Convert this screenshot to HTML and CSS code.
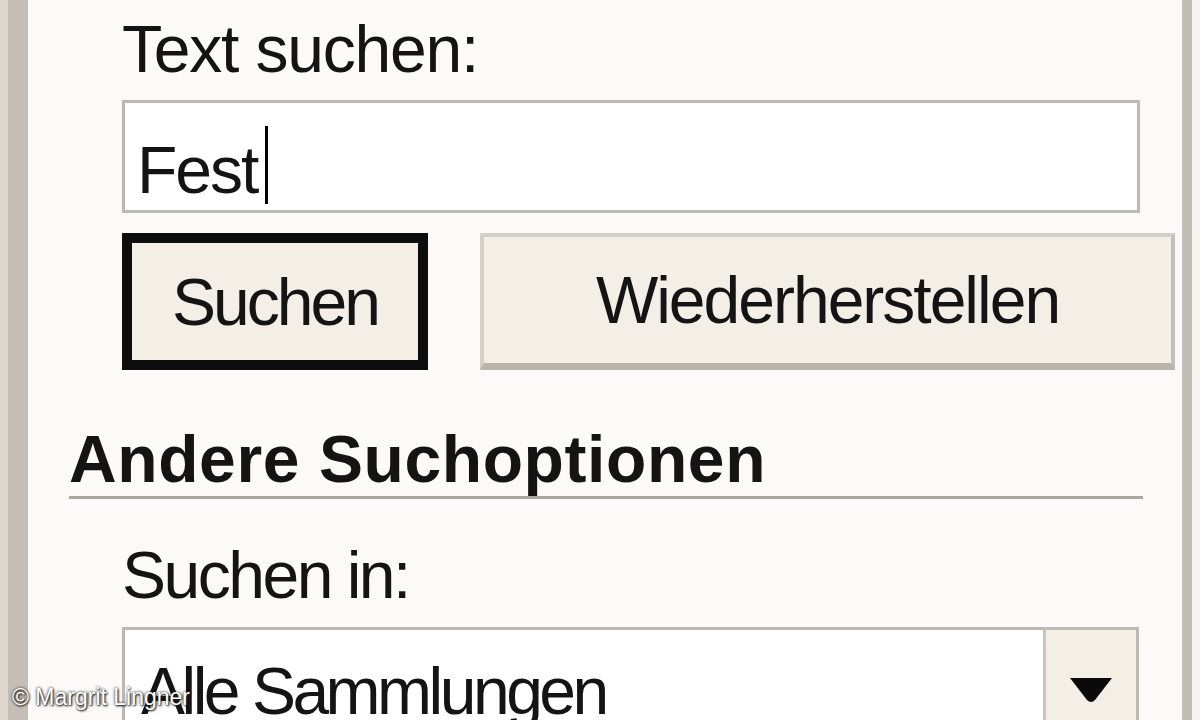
FILE: index.html
```html
<!DOCTYPE HTML>
<html lang="de">
<head>
<meta charset="UTF-8" />
<title>Suchen</title>
<link rel="stylesheet" href="styles.css">
</head>
<body>
<div class="frame">
	<div class="edgeLeft"></div>

	<div class="pane">
		<div class="field">
			<div class="label labelWide">Text suchen:</div>
			<div class="textbox">Fest<span class="caret"></span></div>
			<div class="buttons">
				<button class="btn btnDefault">Suchen</button>
				<button class="btn btnPlain">Wiederherstellen</button>
			</div>
		</div>

		<div class="sectionTitle">Andere Suchoptionen</div>

		<div class="field">
			<div class="label labelSpaced">Suchen in:</div>
			<div class="combo">
				<div class="comboText">Alle Sammlungen</div>
				<div class="comboBtn">
					<svg width="42" height="25" viewBox="0 0 42 25">
						<path d="M0 0 H42 L25 22 Q21 26 17 22 Z" fill="#0a0a0a"/>
					</svg>
				</div>
			</div>
		</div>
	</div>

	<div class="edgeRight"></div>
	<div class="edgeGap"></div>

	<div class="credit">&copy; Margrit Lingner</div>
</div>
</body>
</html>
```

FILE: styles.css
```css
html,
body {
	margin: 0;
	padding: 0;
}

body {
	width: 1200px;
	height: 720px;
	overflow: hidden;
	background-color: #fcfaf8;
	font-family: "Liberation Sans", Arial, sans-serif;
	color: #141414;
}

.frame {
	position: relative;
	display: flex;
	height: 720px;
	overflow: hidden;
}

.edgeLeft {
	width: 20px;
	border-left: 8px solid #ddd7ce;
	background-color: #c6bdb4;
}

.pane {
	flex: 1 1 auto;
	padding-top: 16px;
}

.edgeRight {
	width: 10px;
	background-color: #c2bdb6;
}

.edgeGap {
	width: 8px;
	background-color: #f6f3ee;
}

.field {
	padding-left: 94px;
}

.label {
	font-size: 66px;
	line-height: 66px;
	letter-spacing: -2.5px;
}

.labelWide {
	letter-spacing: -1.2px;
}

.labelSpaced {
	margin-top: 43px;
}

.textbox {
	margin-top: 18px;
	width: 1018px;
	height: 113px;
	box-sizing: border-box;
	border: 3px solid #bcb8b2;
	background-color: #fff;
	padding: 23px 0 0 12px;
	font-size: 66px;
	line-height: 66px;
	letter-spacing: -2px;
}

.caret {
	display: inline-block;
	width: 3px;
	height: 78px;
	background-color: #000;
	vertical-align: -11px;
	margin-left: 8px;
}

.buttons {
	display: flex;
	gap: 52px;
	margin-top: 20px;
}

.btn {
	height: 137px;
	box-sizing: border-box;
	padding: 0;
	background-color: #f3efe6;
	font-family: "Liberation Sans", Arial, sans-serif;
	font-size: 66px;
	line-height: 66px;
	letter-spacing: -2px;
	color: #141414;
	display: flex;
	align-items: center;
	justify-content: center;
}

.btnDefault {
	width: 306px;
	border: 10px solid #0d0d0d;
	letter-spacing: -3px;
}

.btnPlain {
	width: 695px;
	border: 4px solid #d4d0c8;
	border-right-color: #c4c0b8;
	border-bottom: 7px solid #b9b5ad;
}

.sectionTitle {
	margin: 56px 0 0 41px;
	width: 1074px;
	font-size: 66px;
	line-height: 66px;
	font-weight: bold;
	letter-spacing: 0.6px;
	padding-bottom: 4px;
	border-bottom: 3px solid #aba79f;
}

.combo {
	display: flex;
	margin-top: 19px;
	width: 1017px;
	height: 93px;
	box-sizing: border-box;
	border: 3px solid #bcb8b2;
	border-bottom: none;
	background-color: #fff;
}

.comboText {
	flex: 1 1 auto;
	padding: 28px 0 0 16px;
	font-size: 66px;
	line-height: 66px;
	letter-spacing: -3.5px;
}

.comboBtn {
	width: 93px;
	box-sizing: border-box;
	border-left: 3px solid #c9c5bd;
	background-color: #f3efe6;
	display: flex;
	justify-content: center;
	padding-top: 48px;
}

.credit {
	position: absolute;
	left: 12px;
	top: 686px;
	font-size: 23px;
	line-height: 23px;
	color: #fff;
	text-shadow: 0 0 3px #111, 1px 1px 2px #222;
}
```
